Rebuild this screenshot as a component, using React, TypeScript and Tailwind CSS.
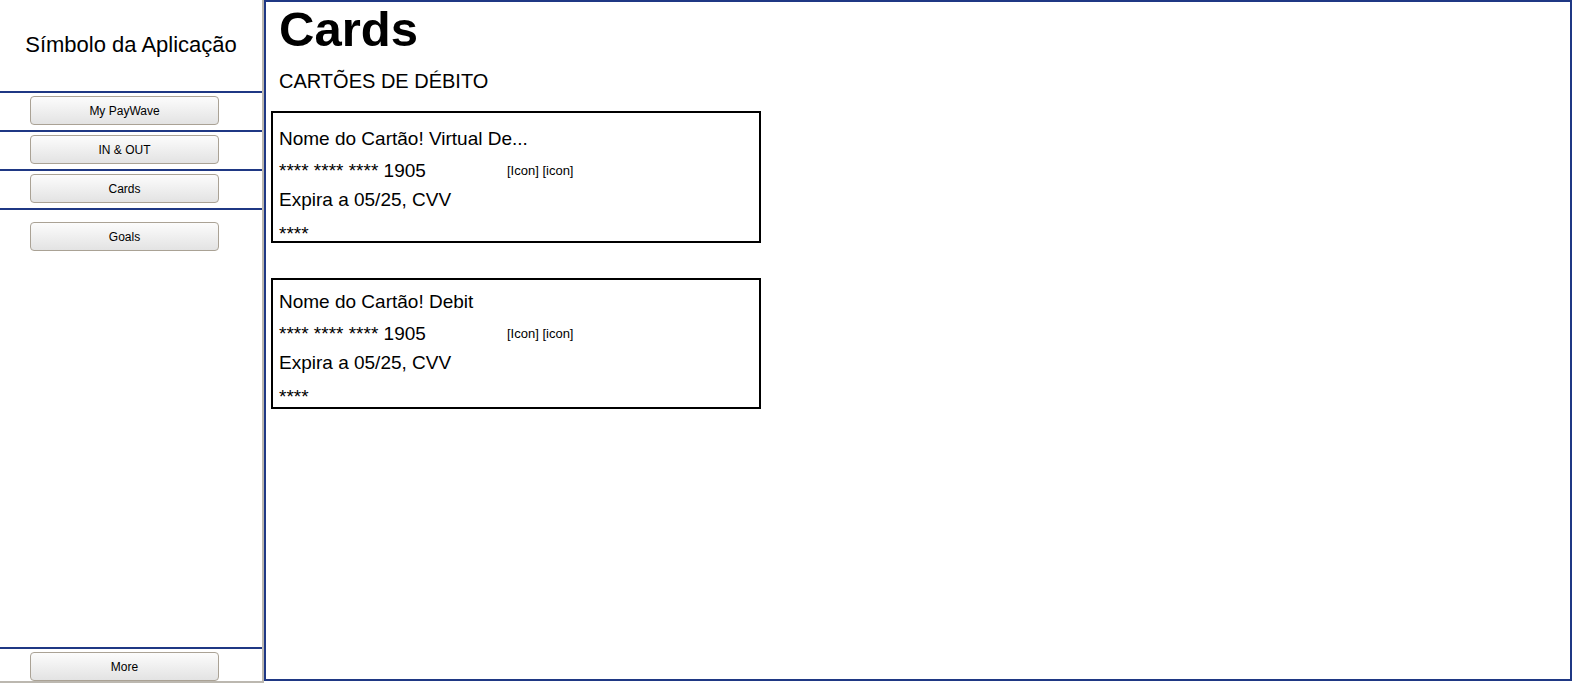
const navItems = ["My PayWave", "IN & OUT", "Cards"];

interface ICard {
  name: string;
  topPad: string;
  height: string;
}

const cards: ICard[] = [
  { name: "Nome do Cartão! Virtual De...", topPad: "pt-[10px]", height: "h-[132px]" },
  { name: "Nome do Cartão! Debit", topPad: "pt-[6px]", height: "h-[131px]" },
];

const NavButton: React.FC<{ label: string }> = ({ label }) => {
  return (
    <button className="ml-[30px] w-[189px] h-[29px] rounded-[4px] border border-[#aaa295] bg-gradient-to-b from-[#fcfcfc] to-[#e3e3e3] text-[12px] text-black">
      {label}
    </button>
  );
};

const CardItem: React.FC<{ card: ICard }> = ({ card }) => {
  return (
    <div
      className={`ml-[5px] w-[490px] ${card.height} border-2 border-black pl-[6px] pr-[5px] ${card.topPad} text-[19px] text-black`}
    >
      <div className="leading-[32px]">{card.name}</div>
      {/* NUMBER + ACTIONS */}
      <div className="flex items-center h-[31px] leading-[31px]">
        <span className="w-[228px]">**** **** **** 1905</span>
        <span className="text-[13px] leading-[15px] mb-[1px]">[Icon] [icon]</span>
      </div>
      <div className="leading-[28px]">Expira a 05/25, CVV</div>
      <div className="mt-[7px] leading-[26px]">****</div>
    </div>
  );
};

export default function App() {
  return (
    <div className="flex w-[1572px] h-[683px] bg-white font-['Liberation_Sans',Arial,sans-serif] overflow-hidden">
      {/* SIDEBAR */}
      <aside className="flex flex-col w-[264px] h-[683px] border-r-2 border-b-2 border-[#bcb8b0]">
        <div className="h-[91px] pb-[2px] flex items-center justify-center text-[22px] text-black">
          Símbolo da Aplicação
        </div>
        {navItems.map((item) => (
          <div key={item} className="border-t-2 border-[#1f3884] pt-[3px] pb-[5px] flex">
            <NavButton label={item} />
          </div>
        ))}
        <div className="border-t-2 border-[#1f3884] pt-[12px] flex">
          <NavButton label="Goals" />
        </div>
        <div className="flex-1" />
        <div className="border-t-2 border-[#1f3884] pt-[3px] flex">
          <NavButton label="More" />
        </div>
      </aside>

      {/* MAIN CONTENT */}
      <main className="flex-1 h-[681px] border-2 border-[#1f3884]">
        <h1 className="pl-[13px] text-[49px] leading-[55px] font-bold text-black">Cards</h1>
        <h2 className="pl-[13px] mt-[12px] text-[20px] leading-[24px] text-black">CARTÕES DE DÉBITO</h2>
        <div className="mt-[18px] flex flex-col gap-[35px]">
          {cards.map((card) => (
            <CardItem key={card.name} card={card} />
          ))}
        </div>
      </main>
    </div>
  );
}
